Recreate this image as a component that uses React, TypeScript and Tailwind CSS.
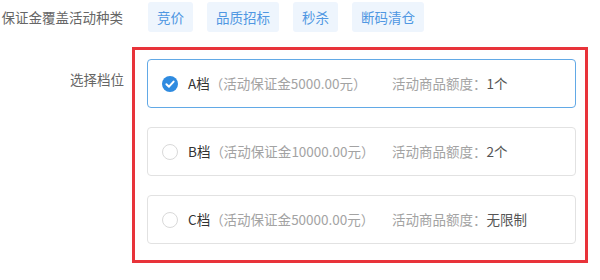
import { useState } from "react";

const tags = ["竞价", "品质招标", "秒杀", "断码清仓"];

const tiers = [
  { id: "A", deposit: "5000.00", quota: "1个" },
  { id: "B", deposit: "10000.00", quota: "2个" },
  { id: "C", deposit: "50000.00", quota: "无限制" },
];

export default function App() {
  const [selected, setSelected] = useState("A");

  return (
    <main
      className="w-[600px] h-[280px] bg-white text-[13.5px] overflow-hidden"
      style={{ fontFamily: '"Noto Sans CJK SC", "Noto Sans", sans-serif' }}
    >
      {/* 活动种类 */}
      <div className="flex items-center pt-[2px]">
        <div className="w-[124px] text-right text-[#666] pr-[1px] whitespace-nowrap">保证金覆盖活动种类</div>
        <div className="flex gap-[14px] ml-[24px]">
          {tags.map((t) => (
            <span
              key={t}
              className="h-[30px] px-[9px] flex items-center rounded-[3px] bg-[#eef5fd] text-[#4f97e2]"
            >
              {t}
            </span>
          ))}
        </div>
      </div>

      {/* 选择档位 */}
      <div className="flex mt-[15px]">
        <div className="w-[124px] text-right text-[#666] pt-[22px]">选择档位</div>
        <div className="ml-[8px] w-[456px] border-[3px] border-[#e8333a] pt-[9px] pl-[12px] pr-[9px] pb-[16px] flex flex-col gap-[19px]">
          {tiers.map((t) => {
            const active = selected === t.id;
            return (
              <button
                key={t.id}
                type="button"
                onClick={() => setSelected(t.id)}
                className={`h-[49px] w-full flex items-center pl-[14px] rounded-[4px] border text-left ${
                  active ? "border-[#62a9e6]" : "border-[#e2e2e2]"
                }`}
              >
                {active ? (
                  <svg width="16" height="16" viewBox="0 0 16 16">
                    <circle cx="8" cy="8" r="8" fill="#2f8be0" />
                    <path d="M4.4 8.2 L7 10.7 L11.6 5.6" fill="none" stroke="#fff" strokeWidth="2" strokeLinecap="round" strokeLinejoin="round" />
                  </svg>
                ) : (
                  <span className="w-[16px] h-[16px] rounded-full border border-[#d9d9d9]" />
                )}
                <span className="w-[204px] ml-[10px] whitespace-nowrap">
                  <span className="text-[#333]">{t.id}档</span>
                  <span className="text-[#a3a3a3]">（活动保证金{t.deposit}元）</span>
                </span>
                <span className="text-[#a3a3a3] whitespace-nowrap">
                  活动商品额度：<span className="text-[#555]">{t.quota}</span>
                </span>
              </button>
            );
          })}
        </div>
      </div>
    </main>
  );
}
